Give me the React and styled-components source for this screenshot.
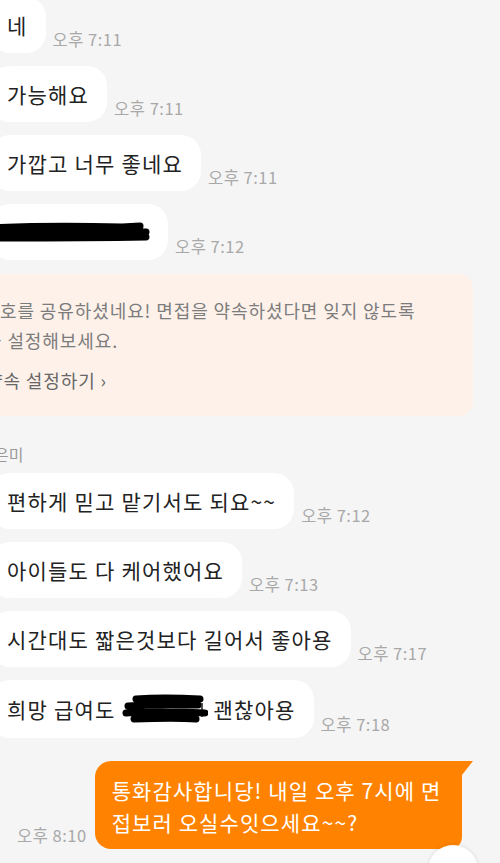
import styled, { createGlobalStyle } from "styled-components";

const GlobalStyle = createGlobalStyle`
  html, body {
    margin: 0;
    padding: 0;
    background: #f5f5f5;
  }
  body {
    font-family: "Noto Sans CJK KR", "Noto Sans", sans-serif;
    overflow: hidden;
  }
`;

const received = [
  { text: "네", time: "오후 7:11" },
  { text: "가능해요", time: "오후 7:11" },
  { text: "가깝고 너무 좋네요", time: "오후 7:11" },
  { redacted: true, time: "오후 7:12" },
];

const received2 = [
  { text: "편하게 믿고 맡기서도 되요~~", time: "오후 7:12" },
  { text: "아이들도 다 케어했어요", time: "오후 7:13" },
  { text: "시간대도 짧은것보다 길어서 좋아용", time: "오후 7:17" },
  { salary: true, time: "오후 7:18" },
];

function Scribble({ width = 160 }) {
  return (
    <ScribbleSvg width={width} height="24" viewBox="0 0 160 24">
      <path
        d="M2 8 C40 6 90 6 132 7 L150 6 M2 13 C50 12 100 12 148 11 L156 12 M4 18 C50 18 100 18 156 17"
        stroke="#000"
        strokeWidth="7"
        strokeLinecap="round"
        fill="none"
      />
    </ScribbleSvg>
  );
}

function SalaryText() {
  return (
    <>
      희망 급여도
      <SalaryMask width="86" height="30" viewBox="0 0 86 30">
        <line x1="80" y1="9" x2="80" y2="23" stroke="#555" strokeWidth="2" />
        <path
          d="M14 5 C40 3 60 4 78 5 M6 12 C34 10 60 11 76 11 M4 19 C30 17 60 18 83 19 M12 25 C40 24 60 24 74 25"
          stroke="#000"
          strokeWidth="7"
          strokeLinecap="round"
          fill="none"
        />
      </SalaryMask>
      괜찮아용
    </>
  );
}

function ReceivedRow({ item }) {
  return (
    <Row>
      <Bubble>
        {item.redacted ? <Scribble /> : item.salary ? <SalaryText /> : item.text}
      </Bubble>
      <Time>{item.time}</Time>
    </Row>
  );
}

export default function App() {
  return (
    <>
      <GlobalStyle />
      <Screen>
        <Thread>
          {received.map((item, i) => (
            <ReceivedRow key={i} item={item} />
          ))}
          <Notice>
            <NoticeLine>호를 공유하셨네요! 면접을 약속하셨다면 잊지 않도록</NoticeLine>
            <NoticeLine $shift={-15}>을 설정해보세요.</NoticeLine>
            <NoticeLink $shift={-14}>약속 설정하기 ›</NoticeLink>
          </Notice>
          <Name>은미</Name>
          {received2.map((item, i) => (
            <ReceivedRow key={i} item={item} />
          ))}
          <SentRow>
            <Time>오후 8:10</Time>
            <SentBubble>
              통화감사합니당! 내일 오후 7시에 면<br />
              접보러 오실수잇으세요~~?
            </SentBubble>
          </SentRow>
        </Thread>
        <FloatButton />
      </Screen>
    </>
  );
}

const Screen = styled.div`
  position: relative;
  width: 500px;
  height: 863px;
  overflow: hidden;
  background: #f5f5f5;
`;

const Thread = styled.div`
  display: flex;
  flex-direction: column;
  gap: 13px;
  margin: -3px 0 0 -10px;
`;

const Row = styled.div`
  display: flex;
  align-items: flex-end;
  gap: 7px;
`;

const Bubble = styled.div`
  display: flex;
  align-items: center;
  box-sizing: border-box;
  min-height: 56px;
  background: #fff;
  border-radius: 20px;
  padding: 14px 18px 14px 17px;
  font-size: 21px;
  line-height: 28px;
  letter-spacing: 1.2px;
  color: #222;
  white-space: nowrap;
`;

const ScribbleSvg = styled.svg`
  display: block;
  margin-left: -17px;
`;

const SalaryMask = styled.svg`
  display: block;
  margin: 0 6px 0 6px;
`;

const Time = styled.span`
  font-size: 16.5px;
  line-height: 20px;
  letter-spacing: 0.5px;
  color: #a8a8a8;
  padding-bottom: 4px;
  white-space: nowrap;
`;

const Notice = styled.div`
  margin: 1px 27px 0 -20px;
  background: #fdf1ea;
  border-radius: 14px;
  padding: 21px 20px 21px 30px;
  display: flex;
  flex-direction: column;
`;

const NoticeLine = styled.div`
  font-size: 18px;
  line-height: 30px;
  letter-spacing: 0.9px;
  color: #7c7c7c;
  white-space: nowrap;
  margin-left: ${(p) => p.$shift || 0}px;
`;

const NoticeLink = styled(NoticeLine)`
  margin-top: 10px;
  color: #666;
`;

const Name = styled.div`
  margin: 15px 0 -4px 4px;
  font-size: 16px;
  line-height: 20px;
  color: #9a9a9a;
`;

const SentRow = styled.div`
  display: flex;
  align-items: flex-end;
  gap: 8px;
  margin-top: 10px;
  padding-left: 27px;
`;

const SentBubble = styled.div`
  position: relative;
  width: 367px;
  box-sizing: border-box;
  background: #ff8300;
  color: #fff;
  font-size: 21px;
  line-height: 32px;
  letter-spacing: 1.1px;
  padding: 13px 14px 11px 17px;
  border-radius: 16px 0 12px 16px;
  white-space: nowrap;

  &::after {
    content: "";
    position: absolute;
    top: 0;
    right: -11px;
    border-top: 14px solid #ff8300;
    border-right: 11px solid transparent;
  }
`;

const FloatButton = styled.div`
  position: absolute;
  left: 428px;
  top: 845px;
  width: 50px;
  height: 50px;
  border-radius: 50%;
  background: #fff;
  box-shadow: 0 0 4px rgba(0, 0, 0, 0.12);
`;
